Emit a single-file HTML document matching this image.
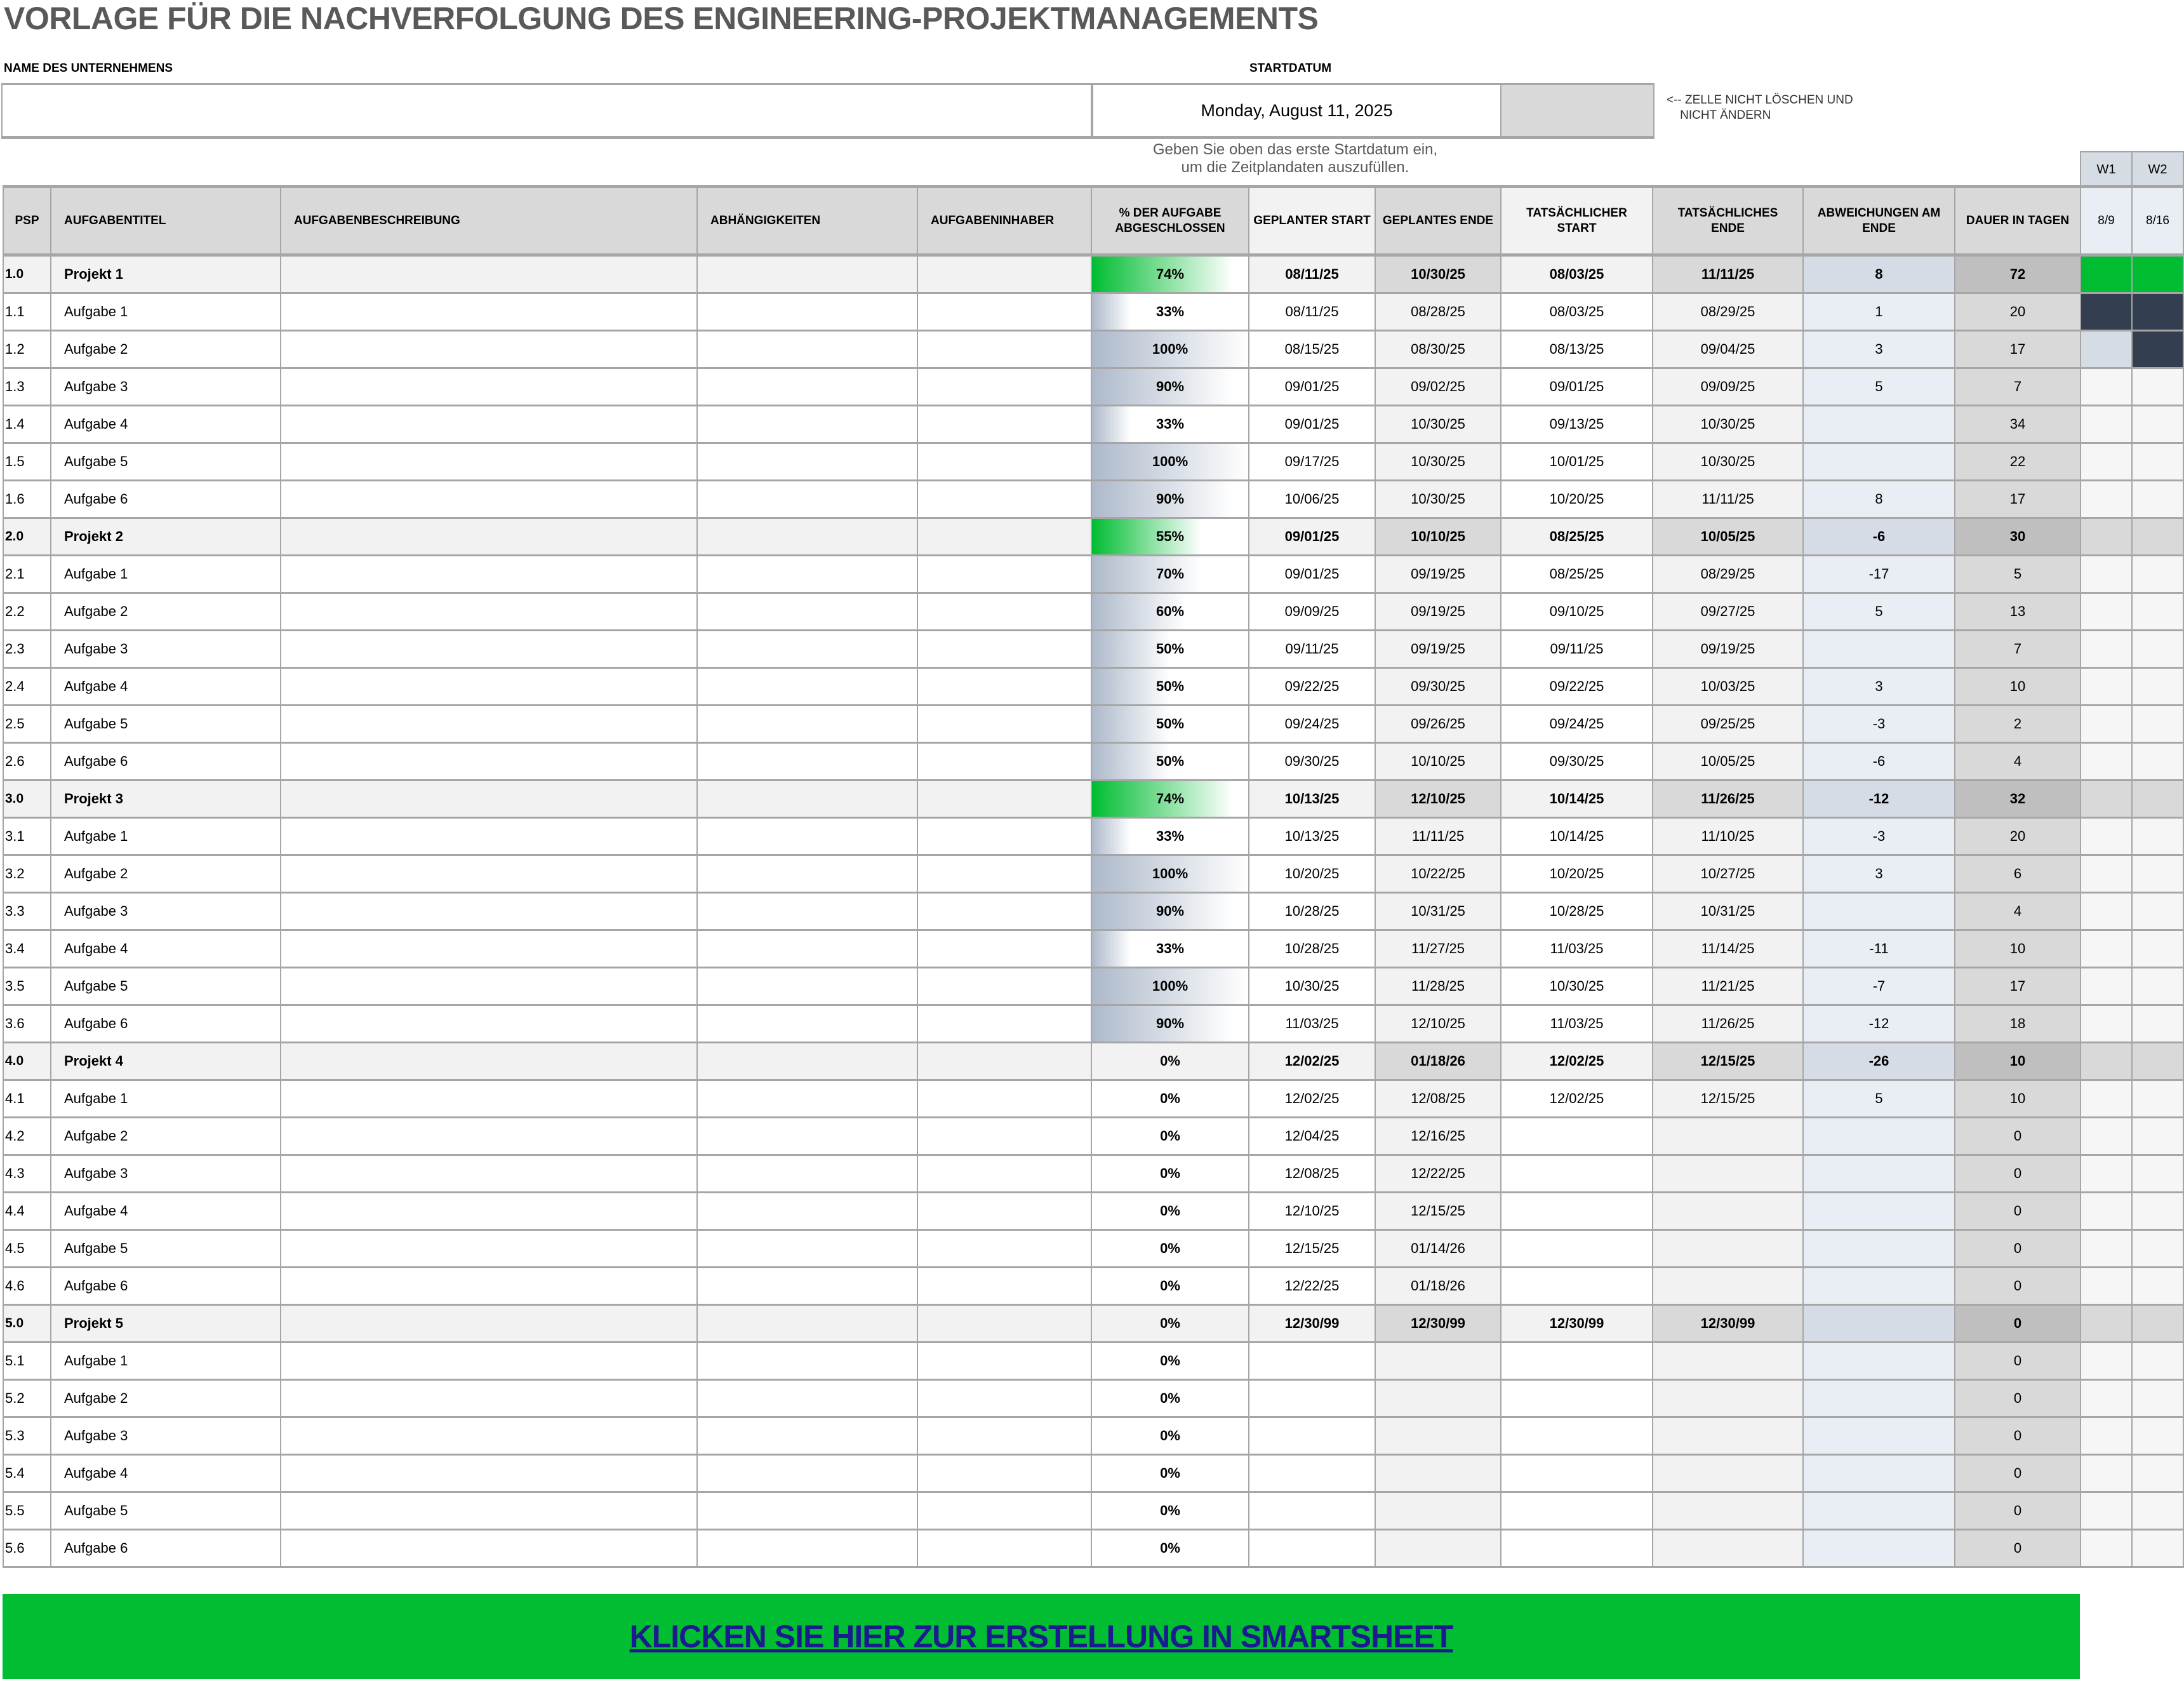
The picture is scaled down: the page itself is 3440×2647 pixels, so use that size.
<!DOCTYPE html>
<html><head><meta charset="utf-8"><style>
body{margin:0;width:3440px;height:2647px;background:#fff;font-family:"Liberation Sans",sans-serif;color:#000;position:relative;overflow:hidden}
.a{position:absolute}
.title{left:6px;top:0px;font-size:50px;font-weight:bold;color:#595959;white-space:nowrap;letter-spacing:-0.5px}
.lbl{font-size:19px;font-weight:bold}
table{position:absolute;left:4px;top:291px;border-collapse:collapse;table-layout:fixed;width:3434px}
td{border:2px solid #a6a6a6;border-bottom:3px solid #a6a6a6;font-size:22px;padding:0 4px;height:56px;text-align:center;white-space:nowrap;overflow:hidden}
td.l{text-align:left;padding-left:20px}
td.p{text-align:left;padding-left:2px}
thead td{height:103px;font-size:19px;font-weight:bold;background:#d9d9d9;border-top:5px solid #a6a6a6;border-bottom:5px solid #a6a6a6;white-space:normal;line-height:24px}
thead td.lt{background:#f2f2f2}
thead td.w{background:#e9edf4;font-weight:normal}
.pe,.ae{background:#f2f2f2}
.v{background:#e9edf4}
.d{background:#d9d9d9}
.w{background:#f6f6f6}
.pc{font-weight:bold}
tr.pr td{background:#f2f2f2;font-weight:bold}
tr.pr td.pe,tr.pr td.ae{background:#d9d9d9}
tr.pr td.v{background:#d6dce5}
tr.pr td.d{background:#bfbfbf}
tr.pr td.w{background:#d9d9d9}
tr.pr td.p{font-size:21px}
td.g{background:#00bd32!important}
td.k{background:#333f50!important}
td.lb{background:#d6dce4!important}
</style></head><body>
<div class="a title">VORLAGE FÜR DIE NACHVERFOLGUNG DES ENGINEERING-PROJEKTMANAGEMENTS</div>
<div class="a lbl" style="left:6px;top:97px">NAME DES UNTERNEHMENS</div>
<div class="a lbl" style="left:1968px;top:97px">STARTDATUM</div>
<div class="a" style="left:2px;top:131px;width:1716px;height:80px;border:2px solid #a6a6a6;border-bottom:5px solid #a6a6a6;border-top:3px solid #a6a6a6"></div>
<div class="a" style="left:1718px;top:131px;width:645px;height:80px;border-top:3px solid #a6a6a6;border-bottom:5px solid #a6a6a6;border-left:2px solid #a6a6a6;font-size:27px;text-align:center;line-height:80px">Monday, August 11, 2025</div>
<div class="a" style="left:2363px;top:131px;width:239px;height:80px;background:#d9d9d9;border:2px solid #a6a6a6;border-top:3px solid #a6a6a6;border-bottom:5px solid #a6a6a6"></div>
<div class="a" style="left:2625px;top:146px;font-size:19px;line-height:24px;color:#333">&lt;-- ZELLE NICHT LÖSCHEN UND<br>&nbsp;&nbsp;&nbsp;&nbsp;NICHT ÄNDERN</div>
<div class="a" style="left:1740px;top:222px;width:600px;text-align:center;font-size:24px;line-height:28px;color:#595959">Geben Sie oben das erste Startdatum ein,<br>um die Zeitplandaten auszufüllen.</div>
<div class="a" style="left:3276px;top:238px;width:79px;height:55px;background:#d6dce4;border:2px solid #a6a6a6;font-size:20px;text-align:center;line-height:55px">W1</div>
<div class="a" style="left:3357px;top:238px;width:79px;height:55px;background:#d6dce4;border:2px solid #a6a6a6;font-size:20px;text-align:center;line-height:55px">W2</div>
<table>
<colgroup><col style="width:75px"><col style="width:362px"><col style="width:656px"><col style="width:347px"><col style="width:274px"><col style="width:248px"><col style="width:199px"><col style="width:198px"><col style="width:239px"><col style="width:237px"><col style="width:239px"><col style="width:198px"><col style="width:81px"><col style="width:81px"></colgroup>
<thead><tr><td>PSP</td><td class="l" style="text-align:left">AUFGABENTITEL</td><td class="l" style="text-align:left">AUFGABENBESCHREIBUNG</td><td class="l" style="text-align:left">ABHÄNGIGKEITEN</td><td class="l" style="text-align:left">AUFGABENINHABER</td><td>% DER AUFGABE<br>ABGESCHLOSSEN</td><td class="lt" style="padding:0">GEPLANTER START</td><td style="padding:0">GEPLANTES ENDE</td><td class="lt">TATSÄCHLICHER<br>START</td><td>TATSÄCHLICHES<br>ENDE</td><td style="padding:0">ABWEICHUNGEN AM<br>ENDE</td><td style="padding:0">DAUER IN TAGEN</td><td class="w">8/9</td><td class="w">8/16</td></tr></thead>
<tbody>
<tr class="pr"><td class="p">1.0</td><td class="l">Projekt 1</td><td></td><td></td><td></td><td class="pc" style="background:linear-gradient(to right,#00bd32,#fff 90%)">74%</td><td>08/11/25</td><td class="pe">10/30/25</td><td>08/03/25</td><td class="ae">11/11/25</td><td class="v">8</td><td class="d">72</td><td class="w g"></td><td class="w g"></td></tr>
<tr><td class="p">1.1</td><td class="l">Aufgabe 1</td><td></td><td></td><td></td><td class="pc" style="background:linear-gradient(to right,#adb9ca,#fff 25%)">33%</td><td>08/11/25</td><td class="pe">08/28/25</td><td>08/03/25</td><td class="ae">08/29/25</td><td class="v">1</td><td class="d">20</td><td class="w k"></td><td class="w k"></td></tr>
<tr><td class="p">1.2</td><td class="l">Aufgabe 2</td><td></td><td></td><td></td><td class="pc" style="background:linear-gradient(to right,#adb9ca,#fff 100%)">100%</td><td>08/15/25</td><td class="pe">08/30/25</td><td>08/13/25</td><td class="ae">09/04/25</td><td class="v">3</td><td class="d">17</td><td class="w lb"></td><td class="w k"></td></tr>
<tr><td class="p">1.3</td><td class="l">Aufgabe 3</td><td></td><td></td><td></td><td class="pc" style="background:linear-gradient(to right,#adb9ca,#fff 90%)">90%</td><td>09/01/25</td><td class="pe">09/02/25</td><td>09/01/25</td><td class="ae">09/09/25</td><td class="v">5</td><td class="d">7</td><td class="w"></td><td class="w"></td></tr>
<tr><td class="p">1.4</td><td class="l">Aufgabe 4</td><td></td><td></td><td></td><td class="pc" style="background:linear-gradient(to right,#adb9ca,#fff 25%)">33%</td><td>09/01/25</td><td class="pe">10/30/25</td><td>09/13/25</td><td class="ae">10/30/25</td><td class="v"></td><td class="d">34</td><td class="w"></td><td class="w"></td></tr>
<tr><td class="p">1.5</td><td class="l">Aufgabe 5</td><td></td><td></td><td></td><td class="pc" style="background:linear-gradient(to right,#adb9ca,#fff 100%)">100%</td><td>09/17/25</td><td class="pe">10/30/25</td><td>10/01/25</td><td class="ae">10/30/25</td><td class="v"></td><td class="d">22</td><td class="w"></td><td class="w"></td></tr>
<tr><td class="p">1.6</td><td class="l">Aufgabe 6</td><td></td><td></td><td></td><td class="pc" style="background:linear-gradient(to right,#adb9ca,#fff 90%)">90%</td><td>10/06/25</td><td class="pe">10/30/25</td><td>10/20/25</td><td class="ae">11/11/25</td><td class="v">8</td><td class="d">17</td><td class="w"></td><td class="w"></td></tr>
<tr class="pr"><td class="p">2.0</td><td class="l">Projekt 2</td><td></td><td></td><td></td><td class="pc" style="background:linear-gradient(to right,#00bd32,#fff 70%)">55%</td><td>09/01/25</td><td class="pe">10/10/25</td><td>08/25/25</td><td class="ae">10/05/25</td><td class="v">-6</td><td class="d">30</td><td class="w"></td><td class="w"></td></tr>
<tr><td class="p">2.1</td><td class="l">Aufgabe 1</td><td></td><td></td><td></td><td class="pc" style="background:linear-gradient(to right,#adb9ca,#fff 70%)">70%</td><td>09/01/25</td><td class="pe">09/19/25</td><td>08/25/25</td><td class="ae">08/29/25</td><td class="v">-17</td><td class="d">5</td><td class="w"></td><td class="w"></td></tr>
<tr><td class="p">2.2</td><td class="l">Aufgabe 2</td><td></td><td></td><td></td><td class="pc" style="background:linear-gradient(to right,#adb9ca,#fff 60%)">60%</td><td>09/09/25</td><td class="pe">09/19/25</td><td>09/10/25</td><td class="ae">09/27/25</td><td class="v">5</td><td class="d">13</td><td class="w"></td><td class="w"></td></tr>
<tr><td class="p">2.3</td><td class="l">Aufgabe 3</td><td></td><td></td><td></td><td class="pc" style="background:linear-gradient(to right,#adb9ca,#fff 50%)">50%</td><td>09/11/25</td><td class="pe">09/19/25</td><td>09/11/25</td><td class="ae">09/19/25</td><td class="v"></td><td class="d">7</td><td class="w"></td><td class="w"></td></tr>
<tr><td class="p">2.4</td><td class="l">Aufgabe 4</td><td></td><td></td><td></td><td class="pc" style="background:linear-gradient(to right,#adb9ca,#fff 50%)">50%</td><td>09/22/25</td><td class="pe">09/30/25</td><td>09/22/25</td><td class="ae">10/03/25</td><td class="v">3</td><td class="d">10</td><td class="w"></td><td class="w"></td></tr>
<tr><td class="p">2.5</td><td class="l">Aufgabe 5</td><td></td><td></td><td></td><td class="pc" style="background:linear-gradient(to right,#adb9ca,#fff 50%)">50%</td><td>09/24/25</td><td class="pe">09/26/25</td><td>09/24/25</td><td class="ae">09/25/25</td><td class="v">-3</td><td class="d">2</td><td class="w"></td><td class="w"></td></tr>
<tr><td class="p">2.6</td><td class="l">Aufgabe 6</td><td></td><td></td><td></td><td class="pc" style="background:linear-gradient(to right,#adb9ca,#fff 50%)">50%</td><td>09/30/25</td><td class="pe">10/10/25</td><td>09/30/25</td><td class="ae">10/05/25</td><td class="v">-6</td><td class="d">4</td><td class="w"></td><td class="w"></td></tr>
<tr class="pr"><td class="p">3.0</td><td class="l">Projekt 3</td><td></td><td></td><td></td><td class="pc" style="background:linear-gradient(to right,#00bd32,#fff 90%)">74%</td><td>10/13/25</td><td class="pe">12/10/25</td><td>10/14/25</td><td class="ae">11/26/25</td><td class="v">-12</td><td class="d">32</td><td class="w"></td><td class="w"></td></tr>
<tr><td class="p">3.1</td><td class="l">Aufgabe 1</td><td></td><td></td><td></td><td class="pc" style="background:linear-gradient(to right,#adb9ca,#fff 25%)">33%</td><td>10/13/25</td><td class="pe">11/11/25</td><td>10/14/25</td><td class="ae">11/10/25</td><td class="v">-3</td><td class="d">20</td><td class="w"></td><td class="w"></td></tr>
<tr><td class="p">3.2</td><td class="l">Aufgabe 2</td><td></td><td></td><td></td><td class="pc" style="background:linear-gradient(to right,#adb9ca,#fff 100%)">100%</td><td>10/20/25</td><td class="pe">10/22/25</td><td>10/20/25</td><td class="ae">10/27/25</td><td class="v">3</td><td class="d">6</td><td class="w"></td><td class="w"></td></tr>
<tr><td class="p">3.3</td><td class="l">Aufgabe 3</td><td></td><td></td><td></td><td class="pc" style="background:linear-gradient(to right,#adb9ca,#fff 90%)">90%</td><td>10/28/25</td><td class="pe">10/31/25</td><td>10/28/25</td><td class="ae">10/31/25</td><td class="v"></td><td class="d">4</td><td class="w"></td><td class="w"></td></tr>
<tr><td class="p">3.4</td><td class="l">Aufgabe 4</td><td></td><td></td><td></td><td class="pc" style="background:linear-gradient(to right,#adb9ca,#fff 25%)">33%</td><td>10/28/25</td><td class="pe">11/27/25</td><td>11/03/25</td><td class="ae">11/14/25</td><td class="v">-11</td><td class="d">10</td><td class="w"></td><td class="w"></td></tr>
<tr><td class="p">3.5</td><td class="l">Aufgabe 5</td><td></td><td></td><td></td><td class="pc" style="background:linear-gradient(to right,#adb9ca,#fff 100%)">100%</td><td>10/30/25</td><td class="pe">11/28/25</td><td>10/30/25</td><td class="ae">11/21/25</td><td class="v">-7</td><td class="d">17</td><td class="w"></td><td class="w"></td></tr>
<tr><td class="p">3.6</td><td class="l">Aufgabe 6</td><td></td><td></td><td></td><td class="pc" style="background:linear-gradient(to right,#adb9ca,#fff 90%)">90%</td><td>11/03/25</td><td class="pe">12/10/25</td><td>11/03/25</td><td class="ae">11/26/25</td><td class="v">-12</td><td class="d">18</td><td class="w"></td><td class="w"></td></tr>
<tr class="pr"><td class="p">4.0</td><td class="l">Projekt 4</td><td></td><td></td><td></td><td class="pc">0%</td><td>12/02/25</td><td class="pe">01/18/26</td><td>12/02/25</td><td class="ae">12/15/25</td><td class="v">-26</td><td class="d">10</td><td class="w"></td><td class="w"></td></tr>
<tr><td class="p">4.1</td><td class="l">Aufgabe 1</td><td></td><td></td><td></td><td class="pc">0%</td><td>12/02/25</td><td class="pe">12/08/25</td><td>12/02/25</td><td class="ae">12/15/25</td><td class="v">5</td><td class="d">10</td><td class="w"></td><td class="w"></td></tr>
<tr><td class="p">4.2</td><td class="l">Aufgabe 2</td><td></td><td></td><td></td><td class="pc">0%</td><td>12/04/25</td><td class="pe">12/16/25</td><td></td><td class="ae"></td><td class="v"></td><td class="d">0</td><td class="w"></td><td class="w"></td></tr>
<tr><td class="p">4.3</td><td class="l">Aufgabe 3</td><td></td><td></td><td></td><td class="pc">0%</td><td>12/08/25</td><td class="pe">12/22/25</td><td></td><td class="ae"></td><td class="v"></td><td class="d">0</td><td class="w"></td><td class="w"></td></tr>
<tr><td class="p">4.4</td><td class="l">Aufgabe 4</td><td></td><td></td><td></td><td class="pc">0%</td><td>12/10/25</td><td class="pe">12/15/25</td><td></td><td class="ae"></td><td class="v"></td><td class="d">0</td><td class="w"></td><td class="w"></td></tr>
<tr><td class="p">4.5</td><td class="l">Aufgabe 5</td><td></td><td></td><td></td><td class="pc">0%</td><td>12/15/25</td><td class="pe">01/14/26</td><td></td><td class="ae"></td><td class="v"></td><td class="d">0</td><td class="w"></td><td class="w"></td></tr>
<tr><td class="p">4.6</td><td class="l">Aufgabe 6</td><td></td><td></td><td></td><td class="pc">0%</td><td>12/22/25</td><td class="pe">01/18/26</td><td></td><td class="ae"></td><td class="v"></td><td class="d">0</td><td class="w"></td><td class="w"></td></tr>
<tr class="pr"><td class="p">5.0</td><td class="l">Projekt 5</td><td></td><td></td><td></td><td class="pc">0%</td><td>12/30/99</td><td class="pe">12/30/99</td><td>12/30/99</td><td class="ae">12/30/99</td><td class="v"></td><td class="d">0</td><td class="w"></td><td class="w"></td></tr>
<tr><td class="p">5.1</td><td class="l">Aufgabe 1</td><td></td><td></td><td></td><td class="pc">0%</td><td></td><td class="pe"></td><td></td><td class="ae"></td><td class="v"></td><td class="d">0</td><td class="w"></td><td class="w"></td></tr>
<tr><td class="p">5.2</td><td class="l">Aufgabe 2</td><td></td><td></td><td></td><td class="pc">0%</td><td></td><td class="pe"></td><td></td><td class="ae"></td><td class="v"></td><td class="d">0</td><td class="w"></td><td class="w"></td></tr>
<tr><td class="p">5.3</td><td class="l">Aufgabe 3</td><td></td><td></td><td></td><td class="pc">0%</td><td></td><td class="pe"></td><td></td><td class="ae"></td><td class="v"></td><td class="d">0</td><td class="w"></td><td class="w"></td></tr>
<tr><td class="p">5.4</td><td class="l">Aufgabe 4</td><td></td><td></td><td></td><td class="pc">0%</td><td></td><td class="pe"></td><td></td><td class="ae"></td><td class="v"></td><td class="d">0</td><td class="w"></td><td class="w"></td></tr>
<tr><td class="p">5.5</td><td class="l">Aufgabe 5</td><td></td><td></td><td></td><td class="pc">0%</td><td></td><td class="pe"></td><td></td><td class="ae"></td><td class="v"></td><td class="d">0</td><td class="w"></td><td class="w"></td></tr>
<tr><td class="p">5.6</td><td class="l">Aufgabe 6</td><td></td><td></td><td></td><td class="pc">0%</td><td></td><td class="pe"></td><td></td><td class="ae"></td><td class="v"></td><td class="d">0</td><td class="w"></td><td class="w"></td></tr>
</tbody></table>
<div class="a" style="left:4px;top:2510px;width:3272px;height:134px;background:#00bd32;text-align:center;line-height:134px;font-size:50px;font-weight:bold;color:#1b1b8f;text-decoration:underline;letter-spacing:-1px">KLICKEN SIE HIER ZUR ERSTELLUNG IN SMARTSHEET</div>
</body></html>
